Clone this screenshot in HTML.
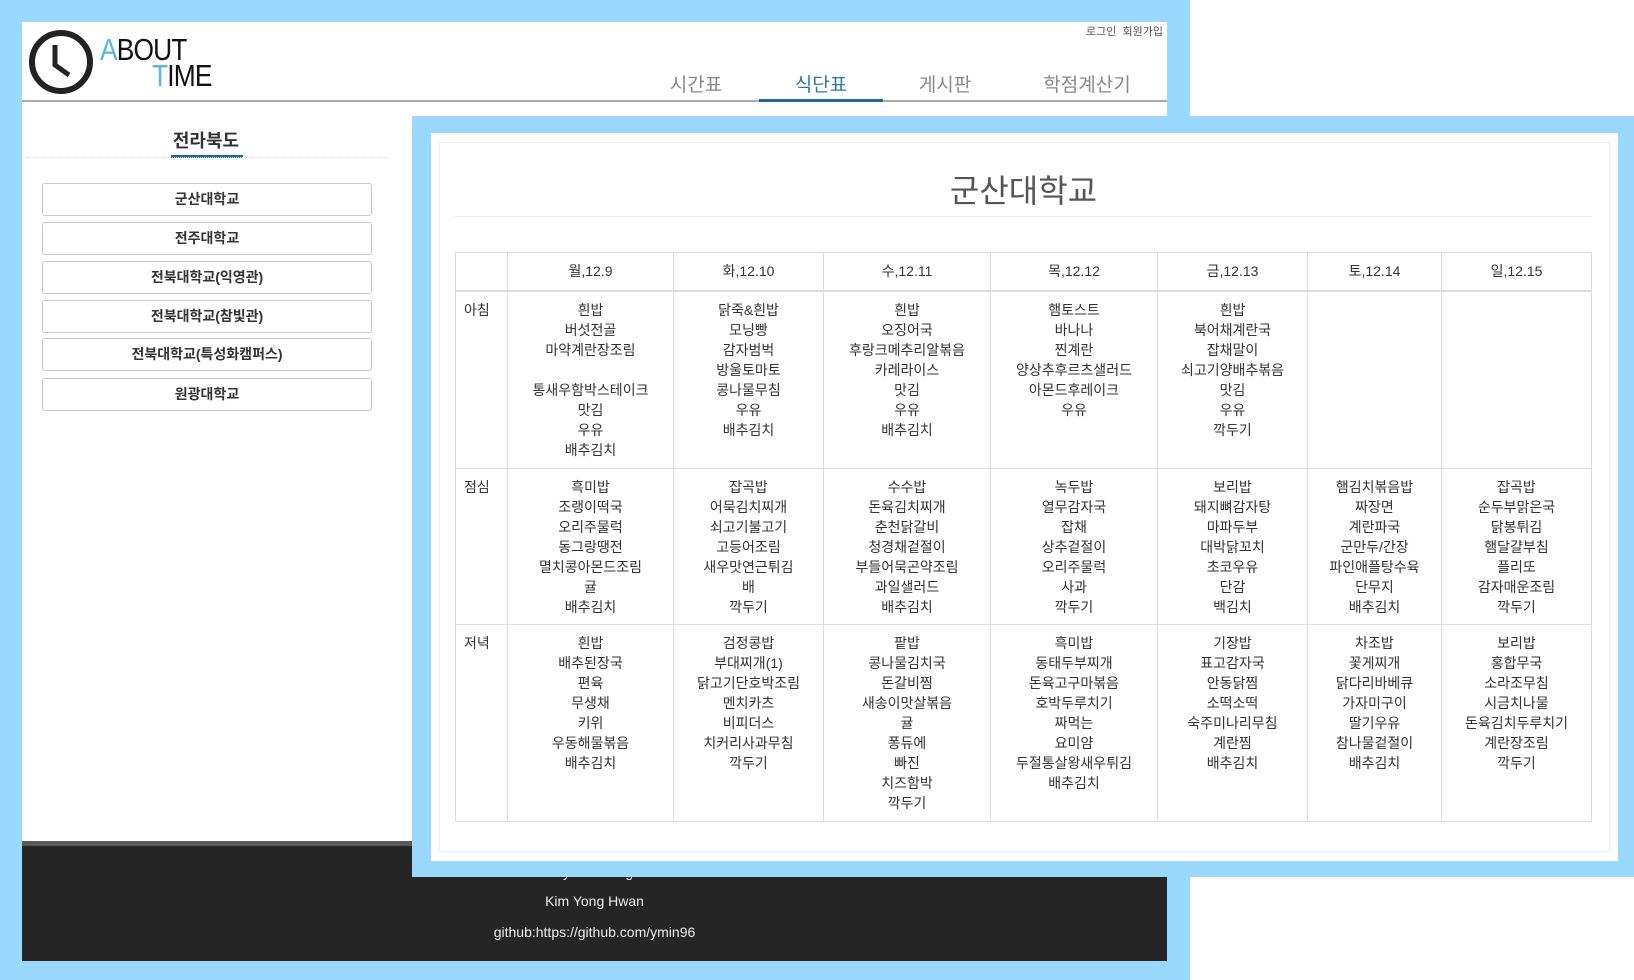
<!DOCTYPE html>
<html><head><meta charset="utf-8"><style>
*{margin:0;padding:0;box-sizing:border-box}
body{width:1634px;height:980px;position:relative;background:#fff;font-family:"Liberation Sans","Noto Sans CJK KR",sans-serif;overflow:hidden;color:#333}
.a{position:absolute}
.btn{position:absolute;left:42px;width:330px;height:33px;border:1px solid #c8c8c8;border-radius:3px;background:#fff;font-size:14px;font-weight:600;text-align:center;line-height:31px;color:#333}
.nav{position:absolute;top:70px;font-size:19px;color:#888;transform:translateX(-50%)}
table{position:absolute;left:455px;top:252px;width:1137px;border-collapse:collapse;font-size:14px}
td,th{border:1px solid #ddd;text-align:center;vertical-align:top;line-height:20px;color:#333}
th{height:38px;vertical-align:middle;font-weight:normal;border-bottom:2px solid #ddd}
td{padding-top:8px}
td.l{text-align:left;padding-left:8px}
</style></head><body>
<div class="a" style="left:0;top:0;width:1190px;height:980px;background:#9ad8fd"></div>
<div class="a" style="left:22px;top:22px;width:1145px;height:939px;background:#fff"></div>
<svg class="a" style="left:28px;top:29px" width="66" height="66" viewBox="0 0 66 66"><circle cx="33" cy="33" r="29" fill="none" stroke="#222" stroke-width="6"/><path d="M27 16 V36 L41 46" fill="none" stroke="#222" stroke-width="5"/></svg>
<div class="a" style="left:100px;top:34px;font-size:31px;line-height:32px;letter-spacing:-1px;color:#111;transform:scaleX(.85);transform-origin:left"><span style="color:#5ab5e5">A</span>BOUT</div>
<div class="a" style="left:152px;top:60px;font-size:31px;line-height:32px;letter-spacing:-1px;color:#111;transform:scaleX(.85);transform-origin:left"><span style="color:#5ab5e5">T</span>IME</div>
<div class="a" style="left:1086px;top:23px;font-size:11px;color:#555">로그인&nbsp;&nbsp;회원가입</div>
<div class="nav" style="left:696px">시간표</div>
<div class="nav" style="left:821px;color:#2a7aa8">식단표</div>
<div class="nav" style="left:945px">게시판</div>
<div class="nav" style="left:1087px">학점계산기</div>
<div class="a" style="left:22px;top:100px;width:1145px;height:2px;background:#aaa"></div>
<div class="a" style="left:759px;top:99px;width:124px;height:3px;background:#1f6a94"></div>
<div class="a" style="left:0;top:127px;width:412px;text-align:center;font-size:18px;font-weight:bold;color:#333">전라북도</div>
<div class="a" style="left:171px;top:155px;width:72px;height:3px;background:#1f6a94"></div>
<div class="a" style="left:26px;top:157px;width:363px;border-top:1px dotted #ddd"></div>
<div class="btn" style="top:183px">군산대학교</div>
<div class="btn" style="top:222px">전주대학교</div>
<div class="btn" style="top:261px">전북대학교(익영관)</div>
<div class="btn" style="top:300px">전북대학교(참빛관)</div>
<div class="btn" style="top:338px">전북대학교(특성화캠퍼스)</div>
<div class="btn" style="top:378px">원광대학교</div>
<div class="a" style="left:22px;top:841px;width:1145px;height:5px;background:#5a5a5a"></div>
<div class="a" style="left:22px;top:846px;width:1145px;height:115px;background:#252525;color:#eee;font-size:14px;text-align:center">
<div style="position:absolute;left:0;width:100%;top:18px">Made by Kim Yong Hwan</div>
<div style="position:absolute;left:0;width:100%;top:47px">Kim Yong Hwan</div>
<div style="position:absolute;left:0;width:100%;top:78px">github:https://github.com/ymin96</div>
</div>
<div class="a" style="left:412px;top:116px;width:1222px;height:761px;background:#9ad8fd"></div>
<div class="a" style="left:431px;top:133px;width:1187px;height:728px;background:#fff"></div>
<div class="a" style="left:439px;top:142px;width:1171px;height:710px;border:1px solid #eee"></div>
<div class="a" style="left:455px;top:166px;width:1137px;text-align:center;font-size:32px;color:#555">군산대학교</div>
<div class="a" style="left:455px;top:216px;width:1137px;border-top:1px solid #eee"></div>
<table>
<tr><th style="width:52px"></th><th style="width:166px">월,12.9</th><th style="width:150px">화,12.10</th><th style="width:167px">수,12.11</th><th style="width:167px">목,12.12</th><th style="width:150px">금,12.13</th><th style="width:134px">토,12.14</th><th>일,12.15</th></tr>
<tr style="height:178px"><td class="l">아침</td><td>흰밥<br>버섯전골<br>마약계란장조림<br>&nbsp;<br>통새우함박스테이크<br>맛김<br>우유<br>배추김치</td><td>닭죽&amp;흰밥<br>모닝빵<br>감자범벅<br>방울토마토<br>콩나물무침<br>우유<br>배추김치</td><td>흰밥<br>오징어국<br>후랑크메추리알볶음<br>카레라이스<br>맛김<br>우유<br>배추김치</td><td>햄토스트<br>바나나<br>찐계란<br>양상추후르츠샐러드<br>아몬드후레이크<br>우유</td><td>흰밥<br>북어채계란국<br>잡채말이<br>쇠고기양배추볶음<br>맛김<br>우유<br>깍두기</td><td></td><td></td></tr>
<tr style="height:156px"><td class="l">점심</td><td>흑미밥<br>조랭이떡국<br>오리주물럭<br>동그랑땡전<br>멸치콩아몬드조림<br>귤<br>배추김치</td><td>잡곡밥<br>어묵김치찌개<br>쇠고기불고기<br>고등어조림<br>새우맛연근튀김<br>배<br>깍두기</td><td>수수밥<br>돈육김치찌개<br>춘천닭갈비<br>청경채겉절이<br>부들어묵곤약조림<br>과일샐러드<br>배추김치</td><td>녹두밥<br>열무감자국<br>잡채<br>상추겉절이<br>오리주물럭<br>사과<br>깍두기</td><td>보리밥<br>돼지뼈감자탕<br>마파두부<br>대박닭꼬치<br>초코우유<br>단감<br>백김치</td><td>햄김치볶음밥<br>짜장면<br>계란파국<br>군만두/간장<br>파인애플탕수육<br>단무지<br>배추김치</td><td>잡곡밥<br>순두부맑은국<br>닭봉튀김<br>햄달걀부침<br>플리또<br>감자매운조림<br>깍두기</td></tr>
<tr style="height:197px"><td class="l">저녁</td><td>흰밥<br>배추된장국<br>편육<br>무생채<br>키위<br>우동해물볶음<br>배추김치</td><td>검정콩밥<br>부대찌개(1)<br>닭고기단호박조림<br>멘치카츠<br>비피더스<br>치커리사과무침<br>깍두기</td><td>팥밥<br>콩나물김치국<br>돈갈비찜<br>새송이맛살볶음<br>귤<br>퐁듀에<br>빠진<br>치즈함박<br>깍두기</td><td>흑미밥<br>동태두부찌개<br>돈육고구마볶음<br>호박두루치기<br>짜먹는<br>요미얌<br>두절통살왕새우튀김<br>배추김치</td><td>기장밥<br>표고감자국<br>안동닭찜<br>소떡소떡<br>숙주미나리무침<br>계란찜<br>배추김치</td><td>차조밥<br>꽃게찌개<br>닭다리바베큐<br>가자미구이<br>딸기우유<br>참나물겉절이<br>배추김치</td><td>보리밥<br>홍합무국<br>소라조무침<br>시금치나물<br>돈육김치두루치기<br>계란장조림<br>깍두기</td></tr>
</table>
</body></html>
